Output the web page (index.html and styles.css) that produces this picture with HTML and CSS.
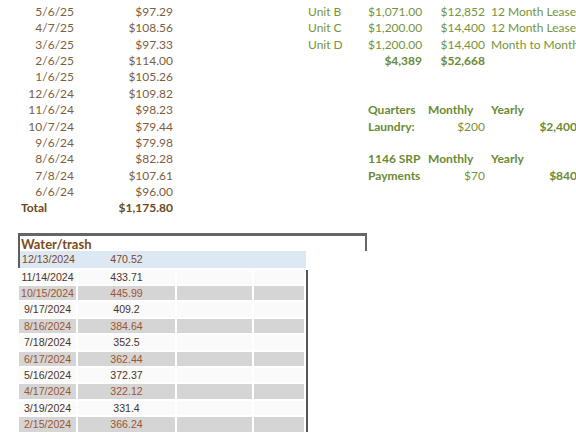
FILE: index.html
```html
<!DOCTYPE html>
<html>
<head>
<meta charset="utf-8">
<link rel="stylesheet" href="styles.css">
</head>
<body>
<div class="sheet">
  <div class="top">
    <div class="c1 r br">5/6/25</div><div class="c2 r br">$97.29</div>
    <div class="c5 g">Unit B</div><div class="c6 r g">$1,071.00</div><div class="c7 r g">$12,852</div><div class="c8 g">12 Month Lease</div>

    <div class="c1 r br">4/7/25</div><div class="c2 r br">$108.56</div>
    <div class="c5 g">Unit C</div><div class="c6 r g">$1,200.00</div><div class="c7 r g">$14,400</div><div class="c8 g">12 Month Lease</div>

    <div class="c1 r br">3/6/25</div><div class="c2 r br">$97.33</div>
    <div class="c5 g">Unit D</div><div class="c6 r g">$1,200.00</div><div class="c7 r g">$14,400</div><div class="c8 g">Month to Month</div>

    <div class="c1 r br">2/6/25</div><div class="c2 r br">$114.00</div>
    <div class="c6 r g b">$4,389</div><div class="c7 r g b">$52,668</div>

    <div class="c1 r br">1/6/25</div><div class="c2 r br">$105.26</div>
    <div class="c1 r br">12/6/24</div><div class="c2 r br">$109.82</div>

    <div class="c1 r br">11/6/24</div><div class="c2 r br">$98.23</div>
    <div class="c6 g b">Quarters</div><div class="c7 g b">Monthly</div><div class="c8 g b">Yearly</div>

    <div class="c1 r br">10/7/24</div><div class="c2 r br">$79.44</div>
    <div class="c6 g b">Laundry:</div><div class="c7 r g">$200</div><div class="c8 r g b">$2,400</div>

    <div class="c1 r br">9/6/24</div><div class="c2 r br">$79.98</div>

    <div class="c1 r br">8/6/24</div><div class="c2 r br">$82.28</div>
    <div class="c6 g b">1146 SRP</div><div class="c7 g b">Monthly</div><div class="c8 g b">Yearly</div>

    <div class="c1 r br">7/8/24</div><div class="c2 r br">$107.61</div>
    <div class="c6 g b">Payments</div><div class="c7 r g">$70</div><div class="c8 r g b">$840</div>

    <div class="c1 r br">6/6/24</div><div class="c2 r br">$96.00</div>

    <div class="c1 br b">Total</div><div class="c2 r br b">$1,175.80</div>
  </div>

  <div class="wt">
    <div class="wt-title">Water/trash</div>
    <div class="wt-first"><span class="d">12/13/2024</span><span class="v">470.52</span></div>
    <div class="wt-rows">
      <div class="w">11/14/2024</div><div class="w">433.71</div><div class="w"></div><div class="w"></div>
      <div class="s">10/15/2024</div><div class="s">445.99</div><div class="s"></div><div class="s"></div>
      <div class="w">9/17/2024</div><div class="w">409.2</div><div class="w"></div><div class="w"></div>
      <div class="s">8/16/2024</div><div class="s">384.64</div><div class="s"></div><div class="s"></div>
      <div class="w">7/18/2024</div><div class="w">352.5</div><div class="w"></div><div class="w"></div>
      <div class="s">6/17/2024</div><div class="s">362.44</div><div class="s"></div><div class="s"></div>
      <div class="w">5/16/2024</div><div class="w">372.37</div><div class="w"></div><div class="w"></div>
      <div class="s">4/17/2024</div><div class="s">322.12</div><div class="s"></div><div class="s"></div>
      <div class="w">3/19/2024</div><div class="w">331.4</div><div class="w"></div><div class="w"></div>
      <div class="s">2/15/2024</div><div class="s">366.24</div><div class="s"></div><div class="s"></div>
    </div>
  </div>
</div>
</body>
</html>
```

FILE: styles.css
```css
html, body {
  margin: 0;
  padding: 0;
  background: #ffffff;
  overflow: hidden;
}

.sheet {
  width: 576px;
  height: 432px;
  overflow: hidden;
}

.top {
  display: grid;
  grid-template-columns: 59px 99px 77px 52px 60px 60px 63px 92px;
  grid-auto-rows: 16.4px;
  padding: 3.8px 0 0 18px;
  font-family: Lato, "Open Sans", sans-serif;
  font-size: 12px;
  line-height: 16.4px;
  white-space: nowrap;
}

.top > div {
  padding: 0 3px;
  overflow: visible;
}

.c1 { grid-column: 1; }
.c2 { grid-column: 2; }
.c5 { grid-column: 5; }
.c6 { grid-column: 6; }
.c7 { grid-column: 7; }
.c8 { grid-column: 8; }

.r { text-align: right; }
.b { font-weight: 700; }
.br { color: #7d5e3e; }
.br.b { color: #6a4a22; }
.g { color: #76933c; }
.g.b { color: #6a8a35; }

.wt {
  margin: 16.4px 0 0 18px;
}

.wt-title {
  width: 344px;
  height: 15px;
  border-top: 3px solid #666666;
  border-left: 2px solid #5e5e5e;
  border-right: 2px solid #666666;
  border-bottom: 0;
  font-family: Lato, sans-serif;
  font-weight: 700;
  font-size: 13px;
  line-height: 16px;
  color: #7b4c1c;
  padding-left: 1px;
}

.wt-first {
  width: 286px;
  height: 16.4px;
  border-left: 2px solid #5e5e5e;
  background: #dde8f5;
  display: grid;
  grid-template-columns: 57px 99px;
  font-family: "Liberation Sans", Arial, sans-serif;
  font-size: 10.6px;
  line-height: 16.4px;
  color: #7a4a2a;
}

.wt-first span { text-align: center; }

.wt-rows {
  margin: 2px 0 0 1px;
  width: 286px;
  display: grid;
  grid-template-columns: 57px 97px 75px 50px;
  column-gap: 2px;
  row-gap: 2px;
  grid-auto-rows: 14.4px;
  border-right: 2px solid #555555;
  padding-right: 1px;
  font-family: "Liberation Sans", Arial, sans-serif;
  font-size: 10.6px;
  line-height: 14.4px;
  text-align: center;
}

.wt-rows .w {
  background: #fafafa;
  color: #4a3628;
}

.wt-rows .s {
  background: #d5d5d5;
  color: #9c5530;
}
```
